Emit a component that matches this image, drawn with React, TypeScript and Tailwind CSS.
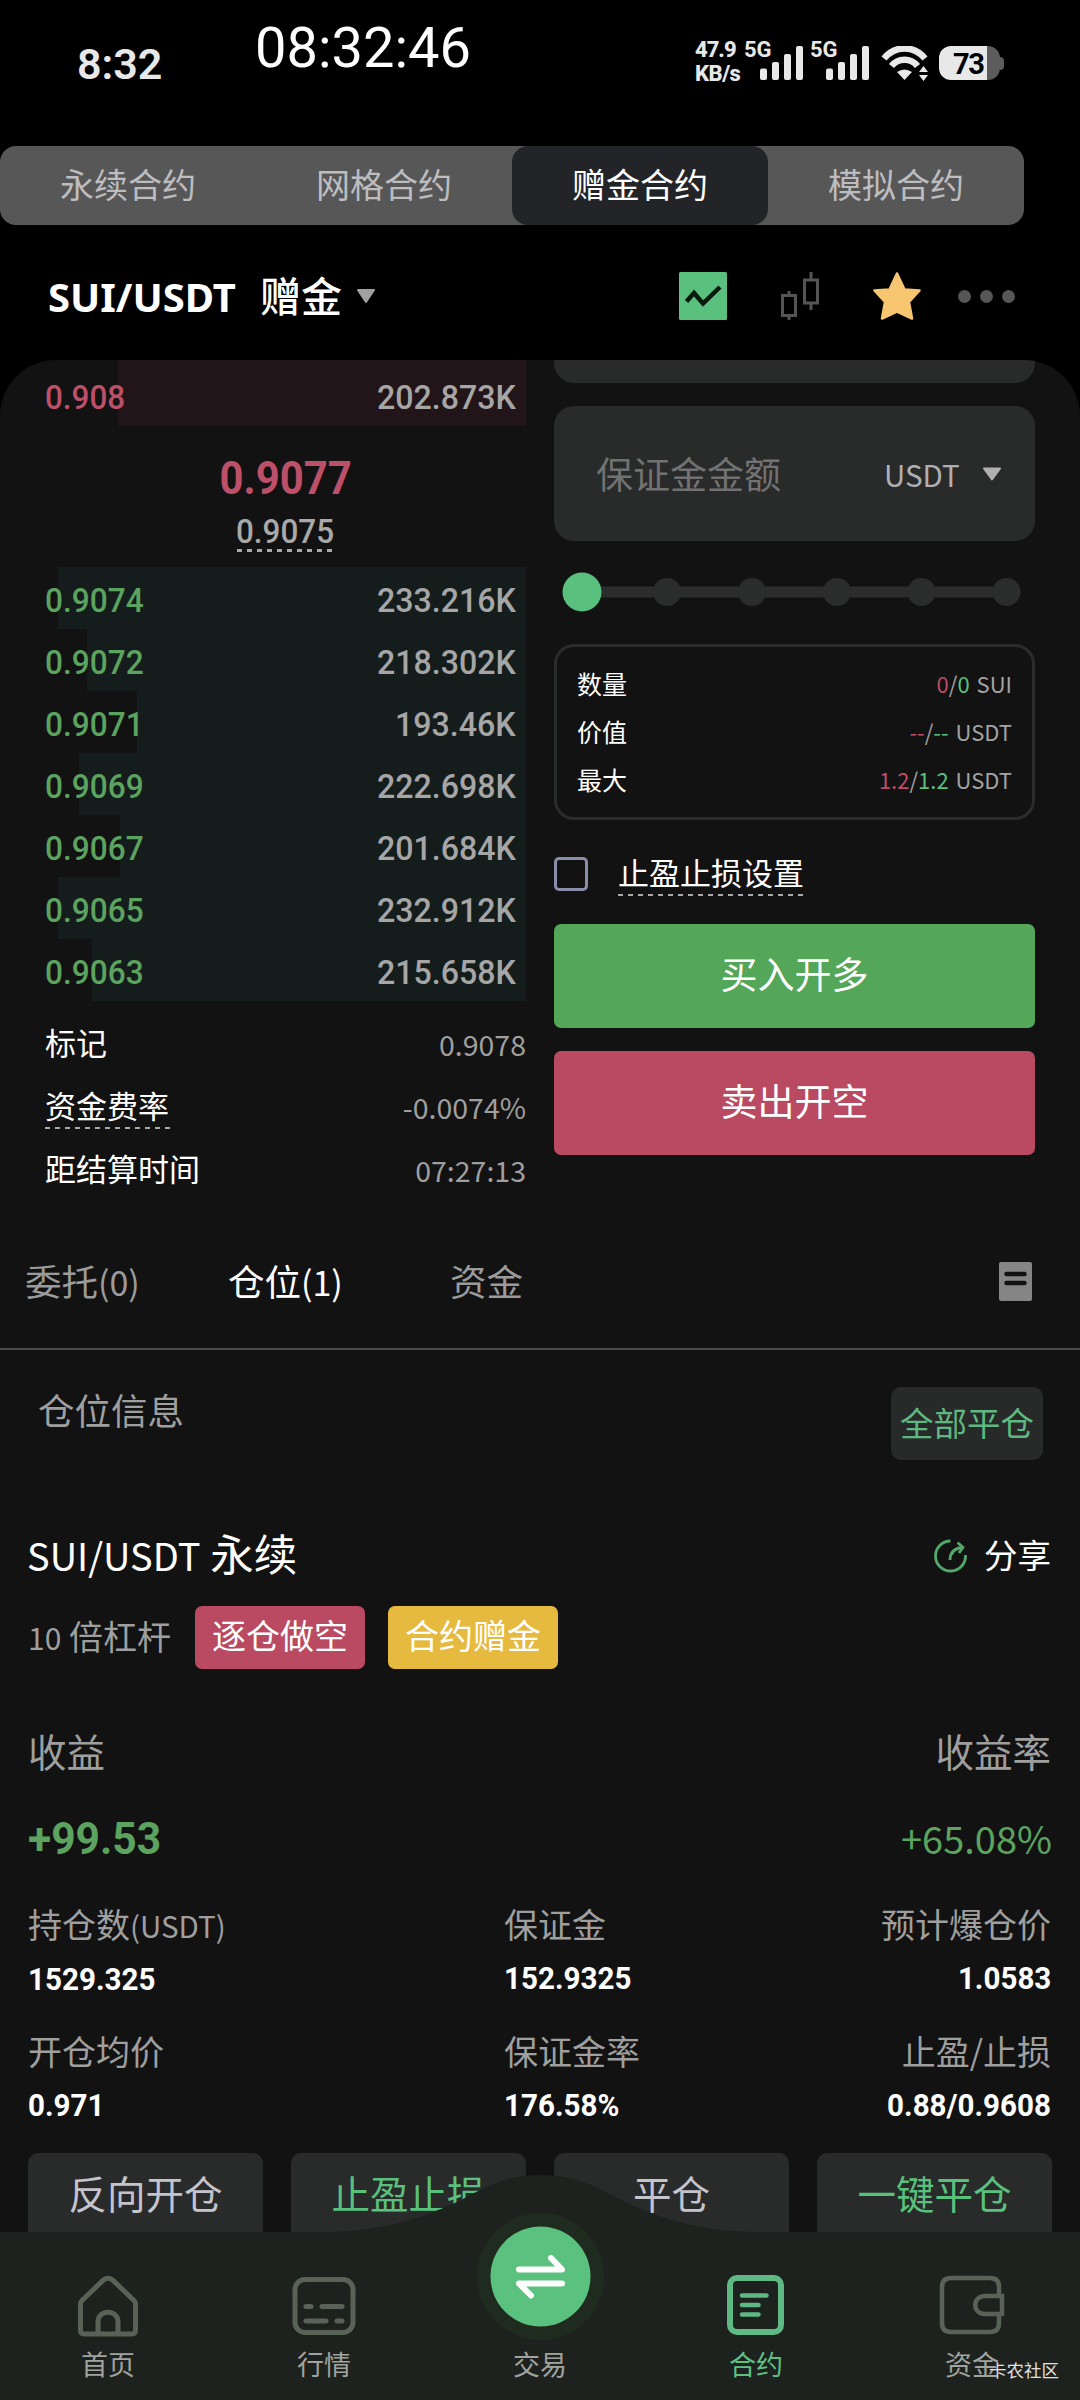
import { ReactNode } from 'react';
import clsx from 'clsx';

interface OrderLevel {
  price: string;
  amount: string;
  depth: number;
}

const marketTabs = ['永续合约', '网格合约', '赠金合约', '模拟合约'];

const bids: OrderLevel[] = [
  { price: '0.9074', amount: '233.216K', depth: 468 },
  { price: '0.9072', amount: '218.302K', depth: 439 },
  { price: '0.9071', amount: '193.46K', depth: 389 },
  { price: '0.9069', amount: '222.698K', depth: 447 },
  { price: '0.9067', amount: '201.684K', depth: 406 },
  { price: '0.9065', amount: '232.912K', depth: 468 },
  { price: '0.9063', amount: '215.658K', depth: 434 },
];

// Narrow DIN-like figures used for prices
function Num({ children, className }: { children: ReactNode; className?: string }) {
  return (
    <span className={clsx("inline-block font-['Roboto'] leading-none whitespace-nowrap", className)}>{children}</span>
  );
}

function DashedLine({ className }: { className?: string }) {
  return (
    <div
      className={clsx(
        'bg-[repeating-linear-gradient(90deg,#a9a9a9_0,#a9a9a9_5px,transparent_5px,transparent_10px)]',
        className
      )}
    />
  );
}

function SignalBars() {
  return (
    <svg width="43" height="34" viewBox="0 0 43 34" fill="#e8e8e8">
      <rect x="0" y="22.5" width="7" height="11.5" rx="2" />
      <rect x="12" y="16" width="7" height="18" rx="2" />
      <rect x="24" y="8" width="7" height="26" rx="2" />
      <rect x="36" y="0" width="7" height="34" rx="2" />
    </svg>
  );
}

function StatusBar() {
  return (
    <div className="flex h-[146px] items-start font-['Roboto'] text-[#e8e8e8]">
      <span className="mt-[42px] ml-[77px] w-[178px] text-[43px] leading-[44px] font-semibold">8:32</span>
      <span className="mt-[20px] w-[440px] text-[56px] leading-[57px] text-white">08:32:46</span>
      <div className="mt-[38px] w-[50px] text-[22px] leading-[24px] font-extrabold">
        <div className="tracking-[-1px]">47.9</div>
        <div className="tracking-[-0.5px]">KB/s</div>
      </div>
      <div className="relative mt-[46px] ml-[15px]">
        <span className="absolute top-[-7px] left-[-16px] text-[22px] leading-[22px] font-bold">5G</span>
        <SignalBars />
      </div>
      <div className="relative mt-[46px] ml-[23px]">
        <span className="absolute top-[-7px] left-[-16px] text-[22px] leading-[22px] font-bold">5G</span>
        <SignalBars />
      </div>
      <svg className="mt-[46px] ml-[12px]" width="48" height="35" viewBox="0 0 48 35" fill="none">
        <path d="M3 12.5 C14 -1 33 -1 44 12.5" stroke="#e8e8e8" strokeWidth="6.5" />
        <path d="M10.5 20 C17 11.5 30 11.5 36.5 20" stroke="#e8e8e8" strokeWidth="6.5" />
        <path d="M16 26 Q23.5 21 31 26 L23.5 34 Z" fill="#e8e8e8" />
        <path d="M42.5 20 L47 26 H38 Z M38 29 H47 L42.5 35 Z" fill="#e8e8e8" />
      </svg>
      <div className="mt-[46px] ml-[10px] flex">
        <div className="h-[34px] w-[61px] rounded-[12px] bg-[linear-gradient(90deg,#e8e8e8_48px,#5c5c5c_48px)] pl-[14px]">
          <span className="block origin-left scale-x-[0.97] text-[30px] leading-[35px] font-bold tracking-[-1.5px] text-black">73</span>
        </div>
        <div className="mt-[11px] h-[13px] w-[4px] rounded-r-[4px] bg-[#5c5c5c]" />
      </div>
    </div>
  );
}

function MarketTabs() {
  return (
    <div className="flex h-[79px] w-[1024px] rounded-[16px] bg-[#575757]">
      {marketTabs.map((tab) => (
        <button
          key={tab}
          className={clsx(
            'h-full w-[256px] rounded-[16px] pb-[3px] text-[34px] leading-none',
            tab === '赠金合约' ? 'bg-[#232428] text-white' : 'text-[#bdbdc0]'
          )}
        >
          {tab}
        </button>
      ))}
    </div>
  );
}

function PairHeader() {
  return (
    <div className="flex h-[135px] items-center pt-[7px]">
      <span className="mt-[2px] ml-[48px] w-[212px] font-['Noto_Sans'] text-[40px] leading-none font-bold text-white">SUI/USDT</span>
      <span className="mt-[-3px] text-[41px] leading-none font-medium text-white">赠金</span>
      <svg className="ml-[14px]" width="20" height="14" viewBox="0 0 20 14">
        <path d="M2 1 H18 L10 13 Z" fill="#a0a0a0" stroke="#a0a0a0" strokeWidth="2" strokeLinejoin="round" />
      </svg>
      <svg className="ml-[303px]" width="48" height="48" viewBox="0 0 48 48" fill="none">
        <rect width="48" height="48" rx="1.5" fill="#5ac07e" />
        <path d="M7.5 29.5 L15 21 L24 31.5 L41 15" stroke="#071a0d" strokeWidth="4.5" />
      </svg>
      <svg className="ml-[54px]" width="38" height="48" viewBox="0 0 38 48" fill="none" stroke="#545454" strokeWidth="3">
        <rect x="1.5" y="23.5" width="13" height="20" />
        <path d="M8 19 V23 M8 44 V48" />
        <rect x="23.5" y="8" width="13" height="23" />
        <path d="M30 0 V8 M30 31 V38" />
      </svg>
      <svg className="ml-[54px]" width="48" height="48" viewBox="0 0 48 48">
        <path
          d="M24 1.5 L31.5 17.5 L46.5 18.5 L36 30 L39 46.5 L24 39.5 L9 46.5 L12 30 L1.5 18.5 L16.5 17.5 Z"
          fill="#f7c671"
          stroke="#f7c671"
          strokeWidth="2.5"
          strokeLinejoin="round"
        />
      </svg>
      <div className="ml-[37px] flex gap-[9px]">
        <i className="size-[13px] rounded-full bg-[#565656]" />
        <i className="size-[13px] rounded-full bg-[#565656]" />
        <i className="size-[13px] rounded-full bg-[#565656]" />
      </div>
    </div>
  );
}

function StatRow({ label, value, dashed }: { label: string; value: string; dashed?: boolean }) {
  return (
    <div className="flex h-[63px] items-start justify-between pl-[45px]">
      <div>
        <div className="text-[31px] leading-[52px] text-white">{label}</div>
        {dashed && <DashedLine className="mt-[-4px] h-[2px] w-[126px]" />}
      </div>
      <span className="text-[28.5px] leading-[56px] text-[#9f9f9f]">{value}</span>
    </div>
  );
}

function OrderBook() {
  return (
    <div className="w-[526px]">
      <div className="relative flex h-[66px] items-center justify-between pt-[7px] pr-[10px] pl-[45px]">
        <div className="absolute inset-y-0 right-0 w-[408px] bg-[#22151a]" />
        <Num className="relative origin-left scale-x-[0.925] text-[34px] font-medium text-[#bd5069]">0.908</Num>
        <Num className="relative origin-right scale-x-[0.945] text-[34px] font-medium text-[#a6a6a6]">202.873K</Num>
      </div>
      <div className="flex h-[141px] flex-col items-center pt-[29px] pl-[45px]">
        <Num className="scale-x-[0.91] text-[46px] font-bold text-[#bd5069]">0.9077</Num>
        <Num className="mt-[13px] scale-x-[0.925] text-[34px] font-medium text-[#a9a9a9]">0.9075</Num>
        <DashedLine className="mt-px h-[3px] w-[97px]" />
      </div>
      {bids.map((b) => (
        <div key={b.price} className="relative flex h-[62px] items-center justify-between pt-[4px] pr-[10px] pl-[45px]">
          <div className="absolute inset-y-0 right-0 bg-[#151d1c]" style={{ width: b.depth }} />
          <Num className="relative origin-left scale-x-[0.93] text-[34px] font-medium text-[#5ba35f]">{b.price}</Num>
          <Num className="relative origin-right scale-x-[0.945] text-[34px] font-medium text-[#a6a6a6]">{b.amount}</Num>
        </div>
      ))}
      <div className="mt-[15px]">
        <StatRow label="标记" value="0.9078" />
        <StatRow label="资金费率" value="-0.0074%" dashed />
        <StatRow label="距结算时间" value="07:27:13" />
      </div>
    </div>
  );
}

function SummaryRow({ label, short, long, unit }: { label: string; short: string; long: string; unit: string }) {
  return (
    <div className="flex h-[48px] items-center justify-between">
      <span className="text-[25px] leading-none text-white">{label}</span>
      <span className="text-[22px] leading-none text-[#a3a3a3] [word-spacing:2px]">
        <span className="text-[#bd4c68]">{short}</span>/<span className="text-[#5ac07e]">{long}</span> {unit}
      </span>
    </div>
  );
}

function OrderForm() {
  return (
    <div className="ml-[28px] w-[481px]">
      <div className="h-[23px] rounded-b-[20px] bg-[#292a2a]" />
      <div className="mt-[23px] flex h-[135px] items-center rounded-[20px] bg-[#292a2a] pl-[42px]">
        <span className="w-[288px] text-[37px] leading-none text-[#717271]">保证金金额</span>
        <span className="w-[98px] pt-[3px] text-[29.5px] leading-none text-[#b0b0b3]">USDT</span>
        <svg width="20" height="14" viewBox="0 0 20 14">
          <path d="M2 1.5 H18 L10 12.5 Z" fill="#b0b0b0" stroke="#b0b0b0" strokeWidth="2" strokeLinejoin="round" />
        </svg>
      </div>

      <svg className="mt-[31px] ml-[8px] block" width="460" height="40" viewBox="0 0 460 40" fill="#2b2c2c">
        <rect x="20" y="14.5" width="424" height="11" />
        <circle cx="105" cy="20" r="14" />
        <circle cx="190" cy="20" r="14" />
        <circle cx="275" cy="20" r="14" />
        <circle cx="359.5" cy="20" r="14" />
        <circle cx="444.5" cy="20" r="14" />
        <circle cx="20" cy="20" r="19.5" fill="#5ac07e" />
      </svg>

      <div className="mt-[32px] h-[176px] rounded-[20px] border-[3px] border-[#2b2c2c] px-[20px] pt-[12px]">
        <SummaryRow label="数量" short="0" long="0" unit="SUI" />
        <SummaryRow label="价值" short="--" long="--" unit="USDT" />
        <SummaryRow label="最大" short="1.2" long="1.2" unit="USDT" />
      </div>

      <div className="mt-[29px] flex h-[75px] items-start">
        <div className="mt-[8px] size-[34px] rounded-[5px] border-[3px] border-[#8a8ea8]" />
        <div className="ml-[30px]">
          <div className="text-[31px] leading-[45px] text-white">止盈止损设置</div>
          <DashedLine className="h-[2px] w-[185px]" />
        </div>
      </div>

      <button className="block h-[104px] w-full rounded-[7px] bg-[#54a658] pb-[5px] text-[37px] leading-none text-white">买入开多</button>
      <button className="mt-[23px] block h-[104px] w-full rounded-[7px] bg-[#b94a62] pb-[5px] text-[37px] leading-none text-white">卖出开空</button>
    </div>
  );
}

function PositionTabs() {
  return (
    <div className="flex h-[150px] items-center border-b-2 border-[#4a4a4a] pt-[14px] text-[36.5px] leading-none text-[#9b9b9b]">
      <span className="ml-[25px] w-[203px]">委托<span className="text-[34px]">(0)</span></span>
      <span className="w-[222px] text-white">仓位<span className="text-[34px]">(1)</span></span>
      <span className="w-[549px]">资金</span>
      <svg width="33" height="39" viewBox="0 0 33 39">
        <rect width="33" height="39" rx="2" fill="#858585" />
        <path d="M7.5 12 H25.5 M7.5 21 H25.5" stroke="#121212" strokeWidth="4.5" strokeLinecap="round" />
      </svg>
    </div>
  );
}

function Metric({ label, value, right }: { label: ReactNode; value: string; right?: boolean }) {
  return (
    <div className={clsx('h-[127px]', right && 'text-right')}>
      <div className="text-[34px] leading-[44px] text-[#9f9f9f]">{label}</div>
      <Num
        className={clsx(
          'mt-[18px] scale-x-[0.97] text-[30.5px] font-bold text-white',
          right ? 'origin-right' : 'origin-left'
        )}
      >
        {value}
      </Num>
    </div>
  );
}

function Position() {
  return (
    <div>
      <div className="flex h-[150px] items-start justify-between pr-[37px] pl-[38px]">
        <span className="mt-[38px] text-[36.5px] leading-[44px] text-[#9f9f9f]">仓位信息</span>
        <button className="mt-[37px] h-[73px] w-[152px] rounded-[10px] bg-[#282929] pb-[4px] text-[33.5px] leading-none text-[#5fb881]">全部平仓</button>
      </div>

      <div className="flex h-[106px] items-center justify-between pr-[29px] pl-[27px] text-white">
        <span className="text-[43.5px] leading-none">
          <span className="text-[38px]">SUI/USDT</span> 永续
        </span>
        <span className="flex items-center pt-[2px] text-[33.5px] leading-none">
          <svg className="mt-[3px] mr-[16px]" width="34" height="34" viewBox="0 0 34 34" fill="none" stroke="#52a86b" strokeWidth="2.8">
            <path d="M16.5 2 A15 15 0 1 0 31.5 16" />
            <path d="M16 21 C16 13 20 9.500 28 8.500" />
            <path d="M23.500 3.500 L29 8.500 L25 14" />
          </svg>
          分享
        </span>
      </div>

      <div className="flex h-[63px] items-center pl-[28px] text-[34px] leading-none">
        <span className="w-[167px] pb-[3px] text-[#9f9f9f]"><span className="text-[30px]">10</span> 倍杠杆</span>
        <span className="flex h-[63px] w-[170px] justify-center rounded-[7px] bg-[#b94a62] pt-[12px] text-white">逐仓做空</span>
        <span className="ml-[23px] flex h-[63px] w-[170px] justify-center rounded-[7px] bg-[#e6b93f] pt-[12px] text-white">合约赠金</span>
      </div>

      <div className="mt-[57px] flex justify-between pr-[29px] pl-[28px] text-[38.5px] leading-[48px] text-[#9f9f9f]">
        <span>收益</span>
        <span>收益率</span>
      </div>
      <div className="mt-[36px] flex h-[56px] items-center justify-between pr-[28px] pl-[28px] text-[#5ba35f]">
        <Num className="origin-left scale-x-[0.945] text-[45px] font-bold">+99.53</Num>
        <span className="text-[38px] leading-none">+65.08%</span>
      </div>

      <div className="mt-[36px] grid grid-cols-[476px_275px_272px] pl-[28px]">
        <Metric label={<>持仓数<span className="text-[29.5px]">(USDT)</span></>} value="1529.325" />
        <Metric label="保证金" value="152.9325" />
        <Metric label="预计爆仓价" value="1.0583" right />
        <Metric label="开仓均价" value="0.971" />
        <Metric label="保证金率" value="176.58%" />
        <Metric label="止盈/止损" value="0.88/0.9608" right />
      </div>

      <div className="mt-[-3px] flex gap-[28px] pl-[28px] text-[38.5px] leading-none text-[#c5c4cc]">
        <button className="h-[110px] w-[235px] rounded-[10px] bg-[#292a2a] pb-[32px]">反向开仓</button>
        <button className="h-[110px] w-[235px] rounded-[10px] bg-[#292a2a] pb-[32px] text-[#5ac07e]">止盈止损</button>
        <button className="h-[110px] w-[235px] rounded-[10px] bg-[#292a2a] pb-[32px]">平仓</button>
        <button className="h-[110px] w-[235px] rounded-[10px] bg-[#292a2a] pb-[32px] text-[#5ac07e]">一键平仓</button>
      </div>
    </div>
  );
}

function NavItem({ label, active, children }: { label: string; active?: boolean; children?: ReactNode }) {
  return (
    <div className={clsx('flex w-[216px] flex-col items-center', active ? 'text-[#5fc084]' : 'text-[#a0a39f]')}>
      <div className="flex h-[74px] items-center">{children}</div>
      <span className="mt-[5px] text-[27px] leading-[32px]">{label}</span>
    </div>
  );
}

function BottomNav() {
  return (
    <div className="absolute inset-x-0 bottom-0 h-[226px]">
      <svg className="absolute inset-0" width="1080" height="226" viewBox="0 0 1080 226">
        <path
          d="M0 58 H325 C382 57 417 46 457 28 C480 17 500 1 541 1 C582 1 602 17 625 28 C665 46 700 57 757 58 H1080 V226 H0 Z"
          fill="#1e221e"
        />
        <circle cx="540.5" cy="102.5" r="63.5" fill="#202b20" />
        <circle cx="540.5" cy="102.5" r="50" fill="#5ac17e" />
        <g fill="none" stroke="#fff" strokeWidth="6" strokeLinecap="round" strokeLinejoin="round">
          <path d="M519 95.5 H562 L551 84" />
          <path d="M562 109.5 H519 L531 121.5" />
        </g>
      </svg>
      <div className="relative flex pt-[95px]">
        <NavItem label="首页">
          <svg width="62" height="62" viewBox="0 0 62 62" fill="none" stroke="#596257" strokeWidth="5">
            <path d="M26.5 5 Q31 1.5 35.5 5 L57 25.5 Q58.5 27 58.5 29 V55 Q58.5 59 54.5 59 H7.5 Q3.5 59 3.5 55 V29 Q3.5 27 5 25.5 Z" />
            <path d="M21 59 V47 C21 34 41 34 41 47 V59" />
          </svg>
        </NavItem>
        <NavItem label="行情">
          <svg className="mb-px" width="64" height="58" viewBox="0 0 64 58" fill="none" stroke="#596257" strokeWidth="5" strokeLinecap="round">
            <rect x="3" y="2.5" width="58" height="53" rx="10" />
            <path d="M14 29.5 H19 M30 29.5 H50 M14 44 H34 M45 44 H50" />
          </svg>
        </NavItem>
        <NavItem label="交易" />
        <NavItem label="合约" active>
          <svg className="mr-px mb-[2px]" width="57" height="60" viewBox="0 0 57 60" fill="none" stroke="#5fb984" strokeLinecap="round">
            <rect x="3" y="3" width="51" height="54" rx="7" strokeWidth="6" />
            <path d="M15 20.5 H39.5 M15 30 H31.5 M15 39.5 H31.5" strokeWidth="4.5" />
          </svg>
        </NavItem>
        <NavItem label="资金">
          <svg className="mr-px mb-[2px]" width="66" height="60" viewBox="0 0 66 60" fill="none" stroke="#596257" strokeWidth="4.5">
            <path d="M60 21 V12 Q60 3 51 3 H12 Q3 3 3 12 V48 Q3 57 12 57 H51 Q60 57 60 48 V39" />
            <path d="M63 21 H46 C33 21 33 39 46 39 H63 Z" />
          </svg>
        </NavItem>
      </div>
      {/* community mark sits on top of the last tab label */}
      <span className="absolute right-[21px] bottom-[19px] text-[17.5px] leading-[22px] text-[#e0e0e0]">卡农社区</span>
    </div>
  );
}

export default function App() {
  return (
    <div className="relative h-[2400px] w-[1080px] overflow-hidden bg-black font-['Noto_Sans_CJK_SC',sans-serif]">
      <StatusBar />
      <MarketTabs />
      <PairHeader />
      <div className="h-[2040px] overflow-hidden rounded-t-[56px] bg-[#121212]">
        <div className="flex h-[840px]">
          <OrderBook />
          <OrderForm />
        </div>
        <PositionTabs />
        <Position />
      </div>
      <BottomNav />
    </div>
  );
}
